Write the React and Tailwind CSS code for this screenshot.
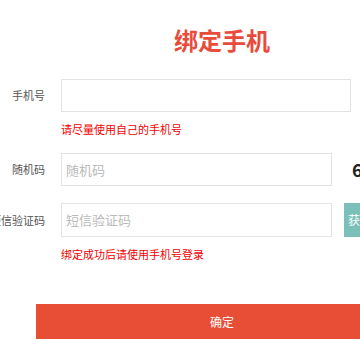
export default function App() {
  const font = { fontFamily: '"Noto Sans CJK SC", "Noto Sans", sans-serif' };
  return (
    <div className="w-[360px] h-[360px] overflow-hidden bg-white relative" style={font}>
      <div className="pt-[24px] flex justify-center">
        <div className="ml-[84px] text-[24px] leading-[32px] font-bold text-[#e74c3c]">绑定手机</div>
      </div>
      <div className="mt-[23px] flex items-center">
        <div className="w-[45px] shrink-0 text-right whitespace-nowrap text-[11px] text-[#555]">手机号</div>
        <div className="ml-[16px] w-[290px] h-[33px] shrink-0 border border-[#e3e3e3]"></div>
      </div>
      <div className="mt-[9px] ml-[61px] text-[11px] leading-[16px] text-[#f20000]">请尽量使用自己的手机号</div>
      <div className="mt-[16px] flex items-center">
        <div className="w-[45px] shrink-0 text-right whitespace-nowrap text-[11px] text-[#555]">随机码</div>
        <div className="ml-[16px] w-[271px] h-[33px] shrink-0 border border-[#e3e3e3] flex items-center pl-[4px] text-[13px] text-[#bbb]">随机码</div>
        <div className="ml-[20px] text-[18px] font-bold text-[#222] shrink-0">6</div>
      </div>
      <div className="mt-[17px] flex items-center">
        <div className="w-[45px] shrink-0 flex justify-end">
          <span className="whitespace-nowrap text-[11px] text-[#555]">短信验证码</span>
        </div>
        <div className="ml-[16px] w-[271px] h-[34px] shrink-0 border border-[#e3e3e3] flex items-center pl-[4px] text-[13px] text-[#bbb]">短信验证码</div>
        <div className="ml-[12px] w-[80px] h-[34px] shrink-0 bg-[#7bbfb9] text-white text-[12px] flex items-center pl-[4px]">获取验证码</div>
      </div>
      <div className="mt-[9px] ml-[61px] text-[11px] leading-[16px] text-[#f20000]">绑定成功后请使用手机号登录</div>
      <div className="mt-[42px] ml-[36px] w-[372px] h-[35px] bg-[#e84e36] text-white text-[12px] flex items-center justify-center">确定</div>
    </div>
  );
}
